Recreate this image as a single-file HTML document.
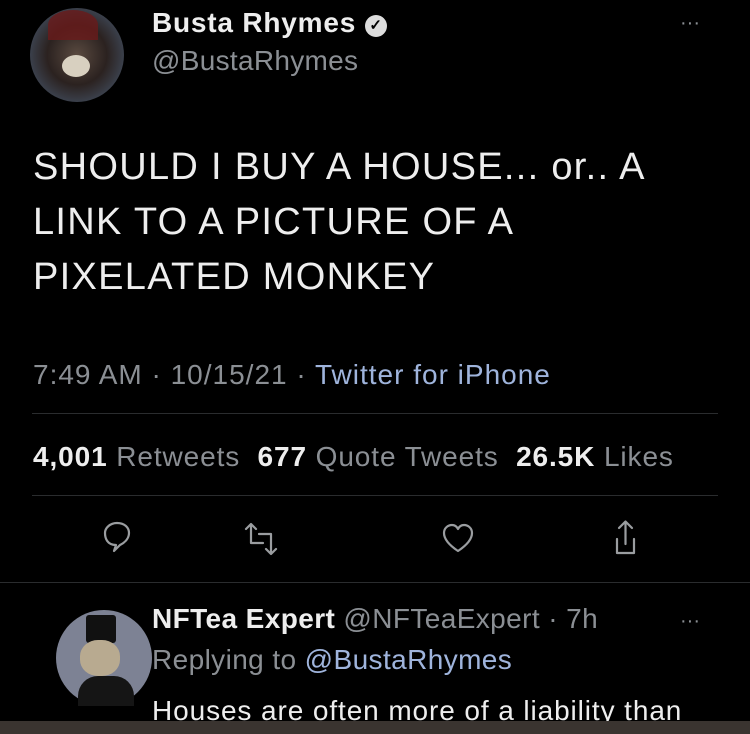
<!DOCTYPE html><html><head><style>
body{margin:0;width:750px;height:734px;background:#000;overflow:hidden;font-family:"Liberation Sans",sans-serif;position:relative;color:#e8e8e8}
.a{position:absolute;white-space:nowrap}
.hr{position:absolute;left:32px;right:32px;height:1px;background:#2a2c2e}
.g{color:#8b8f94}
</style></head><body>
<div class="a" style="left:30px;top:8px;width:94px;height:94px;border-radius:50%;background:radial-gradient(circle at 50% 50%,#5a4a40 0,#2b2220 45%,#3a3f4a 70%,#111 100%)"></div>
<div class="a" style="left:48px;top:10px;width:50px;height:30px;border-radius:50% 50% 0 0;background:#6a1a1a;opacity:.8"></div>
<div class="a" style="left:62px;top:55px;width:28px;height:22px;border-radius:50%;background:#d8d0c0"></div>
<div class="a" style="left:152px;top:7px;font-size:28px;font-weight:bold;color:#eee;letter-spacing:0.8px">Busta Rhymes <span style="display:inline-block;width:22px;height:22px;border-radius:50%;background:#ddd;color:#000;font-size:15px;text-align:center;line-height:22px;vertical-align:2px;letter-spacing:0">✓</span></div>
<div class="a g" style="left:152px;top:45px;font-size:28px;letter-spacing:0.3px">@BustaRhymes</div>
<div class="a g" style="left:680px;top:12px;font-size:20px">···</div>
<div class="a" style="left:33px;top:140px;font-size:38px;line-height:55px;color:#eee;letter-spacing:1.3px">SHOULD I BUY A HOUSE... or.. A<br>LINK TO A PICTURE OF A<br>PIXELATED MONKEY</div>
<div class="a g" style="left:33px;top:359px;font-size:28px;letter-spacing:1px">7:49 AM · 10/15/21 · <span style="color:#9fb4dc">Twitter for iPhone</span></div>
<div class="hr" style="top:413px"></div>
<div class="a g" style="left:33px;top:441px;font-size:28px;letter-spacing:0.9px"><b style="color:#eee">4,001</b> Retweets&nbsp; <b style="color:#eee">677</b> Quote Tweets&nbsp; <b style="color:#eee">26.5K</b> Likes</div>
<div class="hr" style="top:495px"></div>
<svg class="a" style="left:0;top:515px" width="750" height="50" fill="none" stroke="#9a9da0" stroke-width="2.2" stroke-linecap="round" stroke-linejoin="round">
<path d="M116 30c-9 0-11-7-11-12s5-10 12-10 12 4 12 10c0 6-5 10-9 12l-6 6z"/>
<path d="M256 14l-5-5-5 5M251 10v18h12M266 34l5 5 5-5M271 38v-19h-12"/>
<path d="M458 36c-12-8-14-14-14-18 0-5 4-8 8-8 3 0 5 2 6 4 1-2 3-4 6-4 4 0 8 3 8 8 0 4-2 10-14 18z"/>
<path d="M617 24v14h17v-14M625.5 7v22M619 13l6.5-6.5 6.5 6.5"/>
</svg>
<div class="hr" style="top:582px;left:0;right:0"></div>
<div class="a" style="left:56px;top:610px;width:96px;height:96px;border-radius:50%;background:#7d8294"></div>
<div class="a" style="left:86px;top:615px;width:30px;height:28px;background:#111;border-radius:3px"></div>
<div class="a" style="left:80px;top:640px;width:40px;height:36px;border-radius:45%;background:#b8aa90"></div>
<div class="a" style="left:78px;top:676px;width:56px;height:30px;background:#151515;border-radius:20px 20px 0 0"></div>
<div class="a" style="left:152px;top:603px;font-size:28px;letter-spacing:0.4px"><b style="color:#eee">NFTea Expert</b> <span class="g">@NFTeaExpert · 7h</span></div>
<div class="a g" style="left:680px;top:610px;font-size:20px">···</div>
<div class="a g" style="left:152px;top:644px;font-size:28px;letter-spacing:0.4px">Replying to <span style="color:#9fb4dc">@BustaRhymes</span></div>
<div class="a" style="left:152px;top:695px;font-size:28px;color:#eee;letter-spacing:0.9px">Houses are often more of a liability than</div>
<div class="a" style="left:0;top:721px;width:750px;height:13px;background:#3a3430"></div>
</body></html>
